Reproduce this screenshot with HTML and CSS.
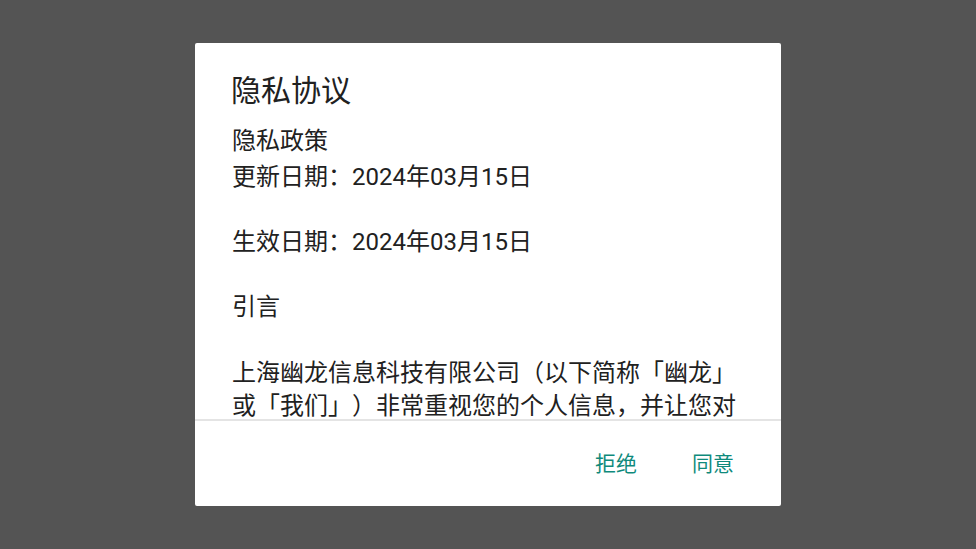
FILE: index.html
```html
<!DOCTYPE html>
<html lang="zh-CN">
<head>
<meta charset="utf-8">
<title>隐私协议</title>
<link rel="stylesheet" href="styles.css">
</head>
<body>
<div class="dialog">
  <div class="title">隐私协议</div>
  <div class="content">
    <p class="lead">隐私政策</p>
    <p class="para">更新日期：2024年03月15日</p>
    <p class="para">生效日期：2024年03月15日</p>
    <p class="para">引言</p>
    <p class="para">上海幽龙信息科技有限公司（以下简称「幽龙」或「我们」）非常重视您的个人信息，并让您对</p>
  </div>
  <div class="divider"></div>
  <div class="actions">
    <span class="btn">拒绝</span>
    <span class="btn">同意</span>
  </div>
</div>
</body>
</html>
```

FILE: styles.css
```css
html, body {
  margin: 0;
  padding: 0;
  height: 100%;
}

body {
  background: #545454;
  display: flex;
  align-items: center;
  justify-content: center;
  font-family: Roboto, "Noto Sans CJK SC", "Noto Sans", sans-serif;
  color: #212121;
  text-spacing-trim: space-all;
}

.dialog {
  width: 586px;
  height: 463px;
  background: #ffffff;
  border-radius: 2px;
  display: flex;
  flex-direction: column;
  overflow: hidden;
}

.title {
  padding: 33px 36px 0;
  font-size: 30px;
  line-height: 30px;
}

.content {
  flex: 1;
  min-height: 0;
  overflow: hidden;
  padding: 18.5px 36px 0 37px;
  font-size: 24px;
  line-height: 32.7px;
}

.content p {
  margin: 0;
}

.lead {
  margin-bottom: 3.5px !important;
}

.para {
  margin-bottom: 32.7px !important;
}

.para:last-child {
  margin-bottom: 0 !important;
}

.divider {
  height: 2px;
  background: #e4e4e4;
  flex: none;
}

.actions {
  height: 85px;
  flex: none;
  display: flex;
  justify-content: flex-end;
  align-items: center;
  padding-right: 20px;
  gap: 1px;
}

.btn {
  width: 96px;
  text-align: center;
  font-size: 21px;
  line-height: 24px;
  color: #0f8a7c;
}
```
